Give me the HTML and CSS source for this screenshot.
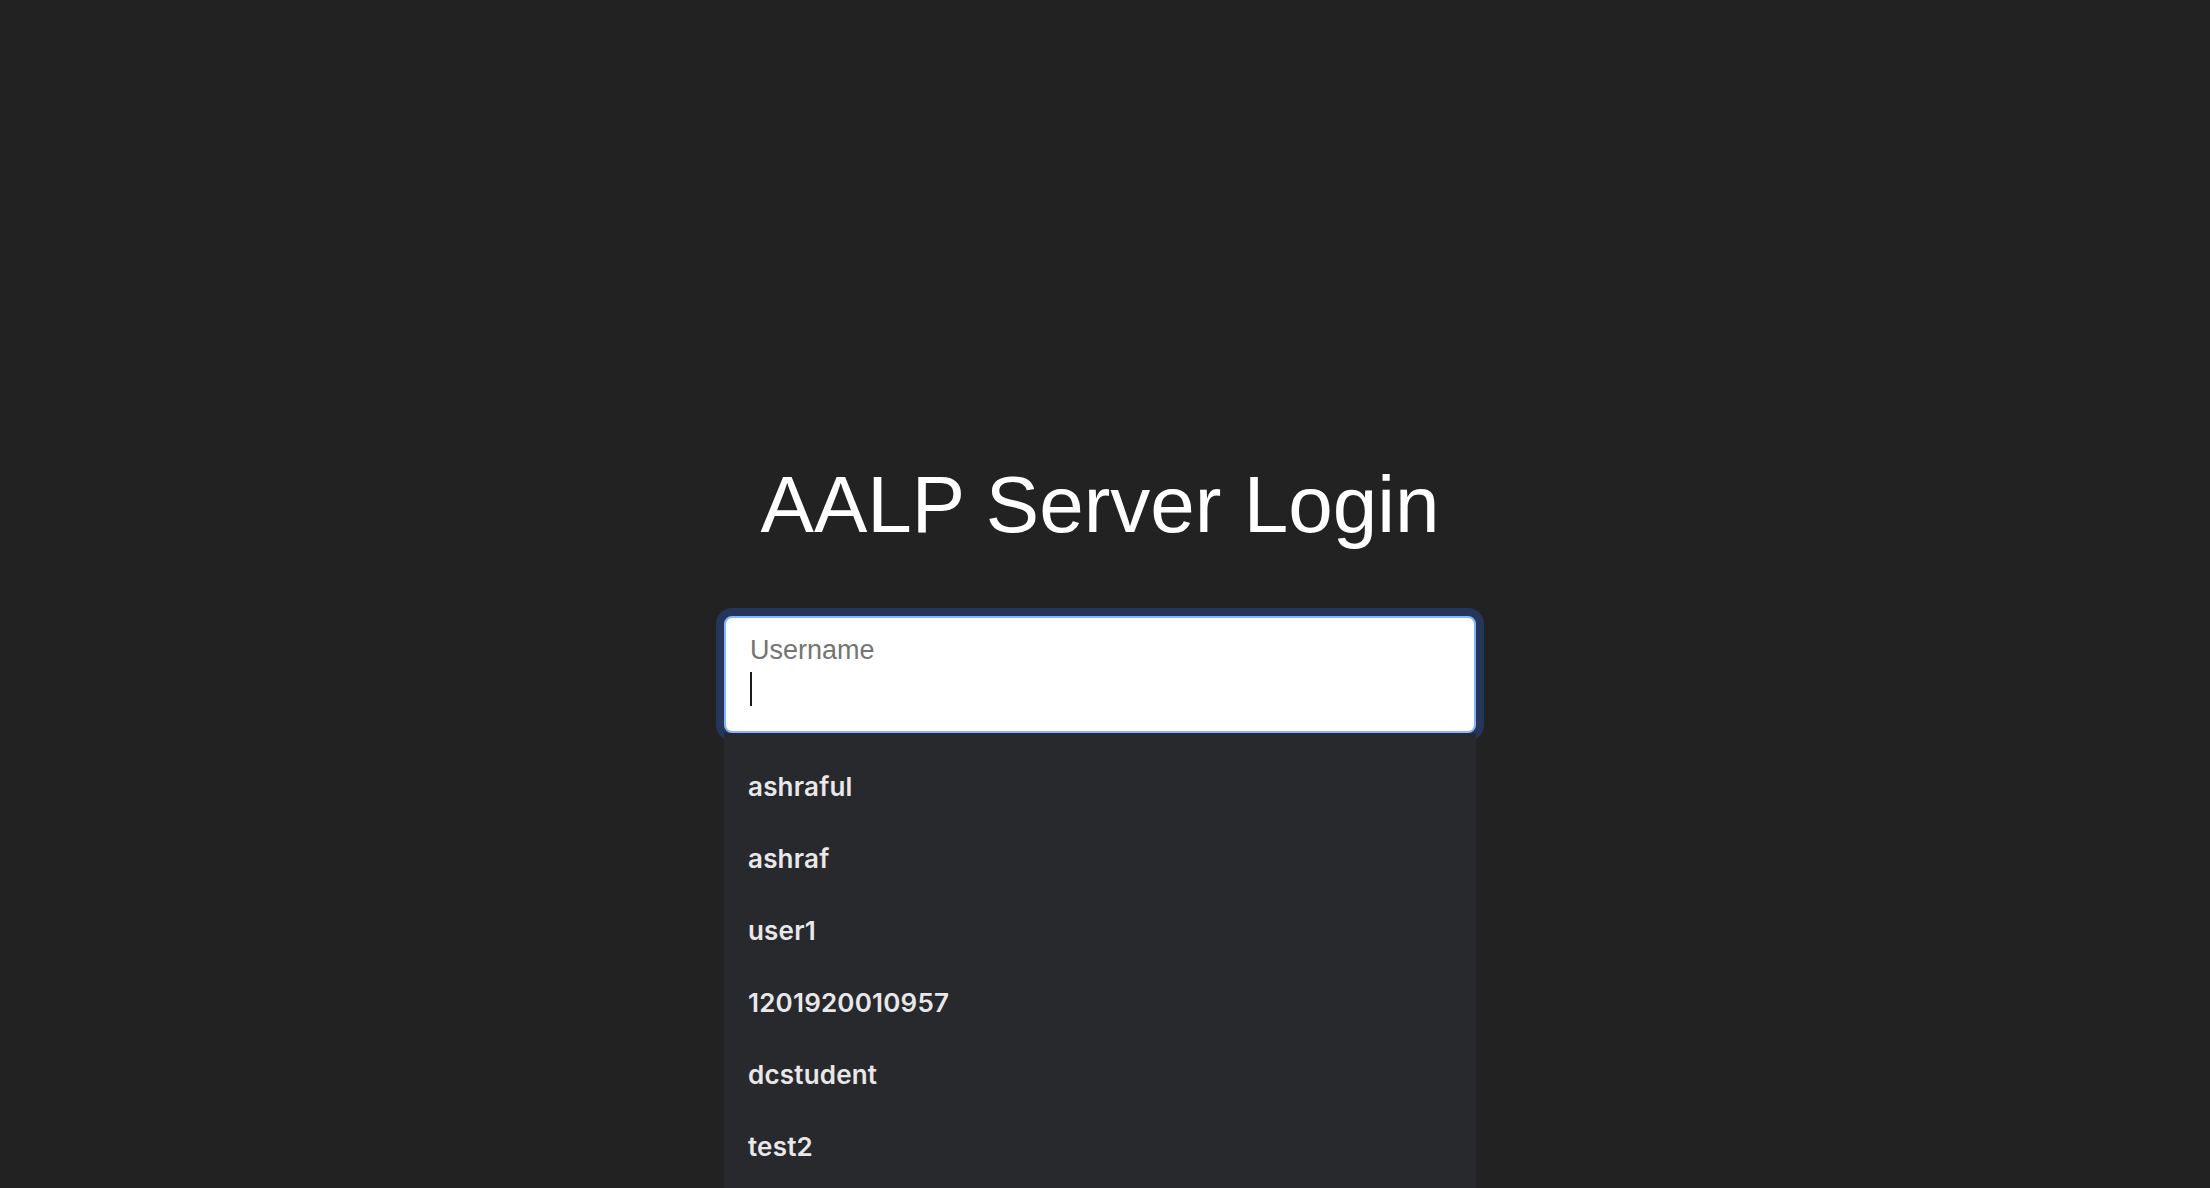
FILE: index.html
```html
<!DOCTYPE html>
<html lang="en">
<head>
<meta charset="utf-8">
<title>AALP Server Login</title>
<link rel="stylesheet" href="styles.css">
</head>
<body>
<main class="page">
  <h1 class="title">AALP Server Login</h1>
  <form class="login">
    <div class="field">
      <div class="input">
        <span class="label">Username</span>
        <span class="caret"></span>
      </div>
      <ul class="suggestions">
        <li class="suggestion">ashraful</li>
        <li class="suggestion">ashraf</li>
        <li class="suggestion">user1</li>
        <li class="suggestion">1201920010957</li>
        <li class="suggestion">dcstudent</li>
        <li class="suggestion">test2</li>
      </ul>
    </div>
  </form>
</main>
</body>
</html>
```

FILE: styles.css
```css
html, body {
  margin: 0;
  height: 100%;
  overflow: hidden;
}

body {
  background: #222222;
  font-family: "Liberation Sans", Arial, sans-serif;
}

.page {
  display: flex;
  flex-direction: column;
  align-items: center;
  padding-top: 459px;
  padding-right: 10px;
}

.title {
  margin: 0;
  font-size: 80px;
  font-weight: 400;
  line-height: 92px;
  color: #ffffff;
}

.login {
  margin-top: 65px;
}

.field {
  position: relative;
  width: 752px;
}

.input {
  box-sizing: border-box;
  height: 117px;
  display: flex;
  flex-direction: column;
  align-items: flex-start;
  padding: 17px 24px 0;
  background: #ffffff;
  border: 2px solid #86b7fe;
  border-radius: 8px;
  box-shadow: 0 0 0 8px #26365a;
}

.label {
  font-size: 27px;
  line-height: 30.5px;
  color: #757575;
}

.caret {
  display: block;
  width: 2px;
  height: 34px;
  margin-top: 6px;
  background: #1a1a1a;
}

.suggestions {
  position: absolute;
  top: 117px;
  left: 0;
  right: 0;
  height: 480px;
  margin: 0;
  padding: 17px 0 0;
  list-style: none;
  background: #28292d;
}

.suggestion {
  height: 72px;
  display: flex;
  align-items: center;
  padding-left: 24px;
  font-family: Inter, "Noto Sans", sans-serif;
  font-size: 26px;
  font-weight: 600;
  letter-spacing: 0.2px;
  color: #e8e8ea;
}
```
